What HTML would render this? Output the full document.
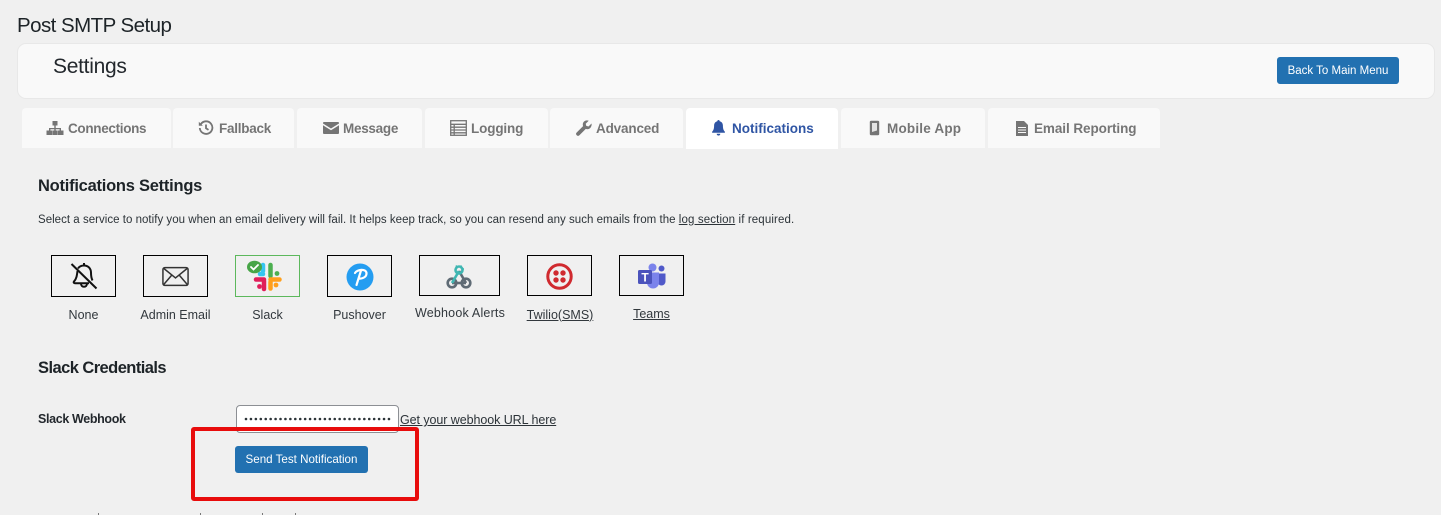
<!DOCTYPE html>
<html><head><meta charset="utf-8"><title>Post SMTP Setup</title>
<style>
html,body{margin:0;padding:0;width:1441px;height:515px;overflow:hidden;background:#f0f0f0;font-family:"Liberation Sans",sans-serif;color:#2c3338}
.a{position:absolute;white-space:nowrap}
.t{position:absolute;top:108px;height:40px;background:#f9f9f9;border-radius:4px 4px 0 0}
.tl{position:absolute;top:121px;font-size:13.5px;line-height:15px;font-weight:bold;color:#757575;white-space:nowrap}
.b{position:absolute;top:255px;height:40px;border:1px solid #000;box-sizing:content-box}
.l{position:absolute;font-size:12.5px;line-height:15px;color:#32383d;white-space:nowrap;text-align:center}
svg{position:absolute;overflow:visible}
.btn{position:absolute;background:#2271b1;border-radius:3px;color:#fff;font-size:11.6px;text-align:center;height:27px;line-height:28px;white-space:nowrap}
</style></head><body>
<div class="a" style="left:17px;top:14px;font-size:20.5px;line-height:24px;color:#1d2327;letter-spacing:-.55px">Post SMTP Setup</div>
<div class="a" style="left:17px;top:43px;width:1416px;height:54px;background:#f9f9f9;border:1px solid #e8e8e8;border-radius:9px"></div>
<div class="a" style="left:53px;top:54px;font-size:21px;line-height:25px;color:#23282d;letter-spacing:-.28px">Settings</div>
<div class="btn" style="left:1277px;top:57px;width:122px;font-size:11.5px;line-height:29px">Back To Main Menu</div>

<div class="t" style="left:22px;width:149px"></div>
<div class="t" style="left:173px;width:121px"></div>
<div class="t" style="left:297px;width:125px"></div>
<div class="t" style="left:425px;width:123px"></div>
<div class="t" style="left:550px;width:133px"></div>
<div class="t" style="left:686px;width:152px;height:41px;background:#fff"></div>
<div class="t" style="left:841px;width:144px"></div>
<div class="t" style="left:988px;width:172px"></div>

<svg style="left:46px;top:120px" width="18" height="16" viewBox="0 0 18 16" fill="#757575"><path d="M6.500 1h5v4.500h-5zM8.300 5h1.400v3h5.300v2.500h-1.400V9.300H9.700v1.200H8.300V9.300H4.400v1.200H3V8h5.300zM.5 10.500h5.500V15H.5zM6.300 10.500h5.400V15H6.300zM12 10.500h5.500V15H12z"/></svg>
<div class="tl" style="left:68px;letter-spacing:-.32px">Connections</div>
<svg style="left:198px;top:120px" width="16" height="16" viewBox="0 0 16 16" fill="none" stroke="#757575" stroke-width="1.800"><path d="M2.800 4.200A6.300 6.300 0 1 1 1.800 8"/><path d="M8 4.500V8.300l2.500 1.600"/><path d="M.8 1.800v4h4z" fill="#757575" stroke="none"/></svg>
<div class="tl" style="left:219px;letter-spacing:-.25px">Fallback</div>
<svg style="left:323px;top:122px" width="16" height="12" viewBox="0 0 16 12" fill="#757575"><path d="M1 0h14a1 1 0 0 1 1 1v.5L8 6.500 0 1.500V1a1 1 0 0 1 1-1zM0 3.300l8 5 8-5V11a1 1 0 0 1-1 1H1a1 1 0 0 1-1-1z"/></svg>
<div class="tl" style="left:343px;letter-spacing:-.28px">Message</div>
<svg style="left:450px;top:120px" width="17" height="16" viewBox="0 0 17 16" fill="none" stroke="#757575" stroke-width="1.300"><rect x=".7" y=".7" width="15.600" height="14.600"/><path d="M.7 4.300h15.600M.7 7.200h15.600M.7 10h15.600M.7 12.800h15.600M4.200 4.300v11"/></svg>
<div class="tl" style="left:471px;letter-spacing:-.14px">Logging</div>
<svg style="left:576px;top:120px" width="16" height="16" viewBox="0 0 16 16" fill="#757575"><path d="M15.500 3.500l-3 3-2.200-.6-.6-2.200 3-3C10.700 0 8.800.6 7.800 1.800 6.800 3 6.500 4.700 7.100 6.100L.7 12.500a1.900 1.900 0 0 0 2.700 2.700L9.800 8.900c1.500.6 3.100.3 4.300-.8 1.200-1.100 1.800-3 1.400-4.600z"/></svg>
<div class="tl" style="left:596px;letter-spacing:-.16px">Advanced</div>
<svg style="left:712px;top:120px" width="13" height="16" viewBox="0 0 13 16" fill="#2f55a4"><path d="M6.500 0C7.200 0 7.700.5 7.700 1.200c2 .5 3.200 2.200 3.200 4.300 0 3.500.7 5 2 6.300v1H.1v-1c1.300-1.300 2-2.800 2-6.300 0-2.100 1.200-3.800 3.200-4.300C5.300.5 5.800 0 6.500 0zM4.700 13.800h3.600a1.800 1.800 0 0 1-3.600 0z"/></svg>
<div class="tl" style="left:732px;color:#2f55a4">Notifications</div>
<svg style="left:869px;top:120px" width="11" height="16" viewBox="0 0 11 16"><rect x=".8" y=".8" width="9.400" height="14.400" rx="1.300" fill="#757575"/><path d="M3 3h5v7.500L3 12z" fill="#e4e4e4"/></svg>
<div class="tl" style="left:887px;letter-spacing:.2px">Mobile App</div>
<svg style="left:1016px;top:121px" width="12" height="15" viewBox="0 0 12 15" fill="#757575"><path d="M0 0h8l4 4v11H0zM2 6h8v1H2zM2 8.500h8v1H2zM2 11h8v1H2z" fill-rule="evenodd"/></svg>
<div class="tl" style="left:1034px;letter-spacing:-.07px">Email Reporting</div>

<div class="a" style="left:38px;top:176px;font-size:16.5px;line-height:20px;color:#1d2327;font-weight:bold;letter-spacing:-.25px">Notifications Settings</div>
<div class="a" style="left:38px;top:212.500px;font-size:11.5px;line-height:14px;color:#2c3338;letter-spacing:.022px">Select a service to notify you when an email delivery will fail. It helps keep track, so you can resend any such emails from the <span style="text-decoration:underline;letter-spacing:.135px">log section</span><span style="letter-spacing:.12px"> if required.</span></div>

<div class="b" style="left:51px;width:63px;height:40px"></div>
<svg style="left:70px;top:262px" width="28" height="28" viewBox="0 0 28 28" fill="none" stroke="#111" stroke-width="2"><path d="M1.500 2l25 24.500"/><path d="M8 6.500C9.300 4.500 11.500 3.500 14 3.500c4.300 0 7 3.200 7 7.300 0 3.200.4 5.500 1.500 7.700M7.500 9c-.6 4.500-1 8-3.500 10.500-.8 1 .2 1.800 1 1.800h14"/><path d="M14 1v2.500M11 21.500c0 2 1.300 3.300 3 3.300s3-1.300 3-3.300"/></svg>
<div class="b" style="left:143px;width:63px;height:40px"></div>
<svg style="left:162px;top:266px" width="27" height="21" viewBox="0 0 29 21" fill="none" stroke="#333" stroke-width="1.600"><rect x="1" y="1" width="27" height="19" rx="2"/><path d="M1.500 1.500L14.500 12 27.500 1.500M1.500 19.500L10.500 9M27.500 19.500L18.500 9"/></svg>
<div class="b" style="left:235px;width:63px;height:40px;border-color:#5cb85c"></div>
<svg style="left:246px;top:259px" width="36" height="32" viewBox="0 0 36 32" stroke-linecap="round" fill="none">
<path d="M17 15h-3" stroke="#36c5f0" stroke-width="4.500"/><path d="M17 6v6" stroke="#36c5f0" stroke-width="4.500"/>
<path d="M24.500 6v11" stroke="#4caf50" stroke-width="4.500"/><circle cx="31" cy="14.500" r="2.400" fill="#4caf50"/>
<path d="M10 20.500h8" stroke="#e01e5a" stroke-width="4.500"/><path d="M18 22v8" stroke="#e01e5a" stroke-width="4.500"/><circle cx="13.500" cy="27.500" r="2.400" fill="#e01e5a"/>
<path d="M24.500 20.500h9" stroke="#ff9f1c" stroke-width="4.500"/><path d="M24.500 23v6.500" stroke="#ff9f1c" stroke-width="4.500"/><circle cx="30" cy="26" r="2.400" fill="#ff9f1c"/>
<ellipse cx="8.500" cy="8" rx="7.500" ry="6.300" fill="#47a547"/><path d="M5 8l2.500 2.500L12 6" stroke="#fff" stroke-width="1.800"/></svg>
<div class="b" style="left:327px;width:63px;height:40px"></div>
<svg style="left:346px;top:263px" width="28" height="28" viewBox="0 0 28 28"><circle cx="14" cy="14" r="13.500" fill="#249df1"/><path d="M9 10C10.500 6.500 20.500 5 20.500 10.500c0 4-5 5.500-8 5M15 7.500L10.500 22" fill="none" stroke="#fff" stroke-width="2.200" stroke-linecap="round"/></svg>
<div class="b" style="left:419px;width:79px;height:39px"></div>
<svg style="left:446px;top:264px" width="26" height="26" viewBox="0 0 26 26" fill="none" stroke-width="2.600"><circle cx="6" cy="19" r="4.300" stroke="#5f6b75"/><circle cx="20" cy="19" r="4.300" stroke="#5f6b75"/><path d="M6 19h14" stroke="#5f6b75"/><path d="M13 7l7 12" stroke="#5f6b75"/><path d="M13 7L6 19" stroke="#3fb6b2"/><circle cx="13" cy="6" r="3.500" stroke="#3fb6b2"/><path d="M10 1.500l1 1.500M15.500 1.500l-1 1.500M18 5h-1.500" stroke="#3fb6b2" stroke-width="1.500"/></svg>
<div class="b" style="left:527px;width:63px;height:39px"></div>
<svg style="left:546px;top:263px" width="27" height="27" viewBox="0 0 27 27"><circle cx="13.500" cy="13.500" r="11.700" fill="none" stroke="#d02a2f" stroke-width="3"/><g fill="#d02a2f"><circle cx="10" cy="10" r="2.700"/><circle cx="17" cy="10" r="2.700"/><circle cx="10" cy="17" r="2.700"/><circle cx="17" cy="17" r="2.700"/></g></svg>
<div class="b" style="left:619px;width:63px;height:39px"></div>
<svg style="left:638px;top:263px" width="28" height="26" viewBox="0 0 28 26"><circle cx="14.500" cy="4.500" r="4" fill="#7b83eb"/><circle cx="23.500" cy="5.500" r="3" fill="#5059c9"/><path d="M19.500 10.500h8v8a4 4 0 0 1-8 0z" fill="#5059c9"/><path d="M9 9.500h12v10a6 6 0 0 1-12 0z" fill="#7b83eb"/><rect x="0" y="7" width="14" height="14" rx="1.500" fill="#4b53bc"/><text x="7" y="18.500" font-size="12" font-weight="bold" text-anchor="middle" fill="#fff" font-family="Liberation Sans">T</text></svg>

<div class="l" style="left:51px;width:65px;top:307.500px">None</div>
<div class="l" style="left:135.500px;width:80px;top:307.500px">Admin Email</div>
<div class="l" style="left:235px;width:65px;top:307.500px">Slack</div>
<div class="l" style="left:327px;width:65px;top:307.500px">Pushover</div>
<div class="l" style="left:410px;width:100px;top:306px;letter-spacing:.2px">Webhook Alerts</div>
<div class="l" style="left:519px;width:82px;top:307.500px;text-decoration:underline">Twilio(SMS)</div>
<div class="l" style="left:619px;width:65px;top:306.500px;text-decoration:underline">Teams</div>

<div class="a" style="left:38px;top:358px;font-size:16.5px;line-height:20px;color:#1d2327;font-weight:bold;letter-spacing:-.56px">Slack Credentials</div>
<div class="a" style="left:38px;top:411.500px;font-size:12.5px;line-height:15px;font-weight:bold;color:#23282d;letter-spacing:-.35px">Slack Webhook</div>
<div class="a" style="left:236px;top:405px;width:161px;height:26px;background:#fff;border:1px solid #8c8f94;border-radius:4px"></div>
<svg style="left:245px;top:417px" width="146" height="4" viewBox="0 0 146 4"><path d="M1 2H145" stroke="#2c3338" stroke-width="2.600" stroke-linecap="round" stroke-dasharray="0 4.930"/></svg>
<div class="a" style="left:400px;top:413px;font-size:12.5px;line-height:15px;color:#2c3338;text-decoration:underline;letter-spacing:-.07px">Get your webhook URL here</div>
<div class="btn" style="left:235px;top:446px;width:133px">Send Test Notification</div>
<div class="a" style="left:191px;top:427px;width:220px;height:66px;border:4px solid #e80c0c;border-radius:3px"></div>

<div class="a" style="left:98px;top:513px;width:1px;height:2px;background:#777"></div>
<div class="a" style="left:200px;top:513px;width:1px;height:2px;background:#777"></div>
<div class="a" style="left:262px;top:513px;width:1px;height:2px;background:#777"></div>
<div class="a" style="left:295px;top:513px;width:1px;height:2px;background:#777"></div>
</body></html>
